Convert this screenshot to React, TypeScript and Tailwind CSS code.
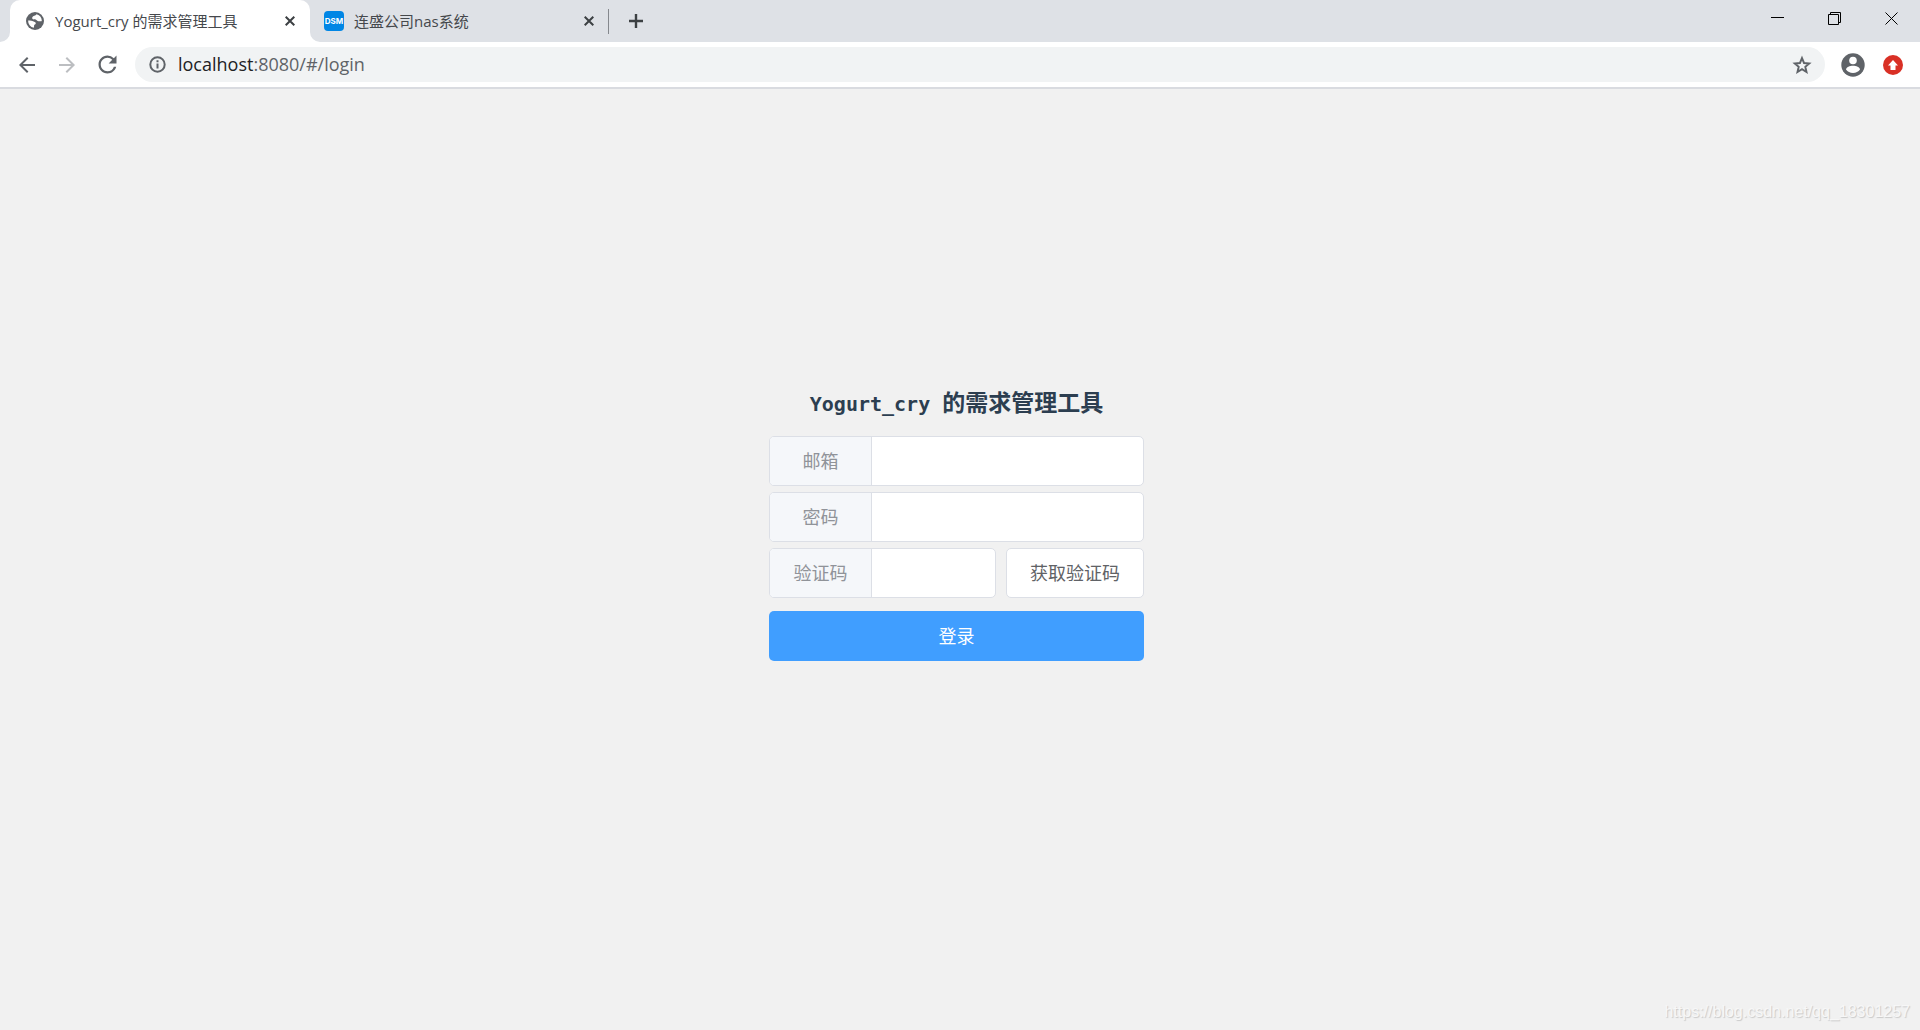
import { MdArrowBack, MdArrowForward, MdRefresh } from "react-icons/md";

function GlobeIcon() {
  return (
    <svg width="18" height="18" viewBox="0 0 18 18" className="shrink-0">
      <circle cx="9" cy="9" r="9" fill="#5f6368" />
      <path
        d="M10.500 2.200C9.800 3.600 8.500 3.400 7.200 4.200 5.900 5 5.800 6.600 7 7.200c1.200.5 2.600-.2 3.400.9.600.9 1.500 1.300 2.600 1.100 1-.2 1.700.5 2.800-.1A7 7 0 0 0 10.500 2.200z"
        fill="#fff"
      />
      <path
        d="M2.100 8.600c1.700-.2 3.700-.1 5 .6 1.200.6 2.700.8 2.700 2 0 1.300-1.500 1.100-1.700 2.200-.1.800.1 1.600-.3 2.400A7 7 0 0 1 2.100 8.600z"
        fill="#fff"
      />
    </svg>
  );
}

function InfoIcon() {
  return (
    <svg width="17" height="17" viewBox="0 0 17 17" className="shrink-0" fill="none" stroke="#5f6368" strokeWidth="2">
      <circle cx="8.500" cy="8.500" r="7.200" />
      <path d="M8.500 7.500v5M8.500 4.200v2" />
    </svg>
  );
}

function StarIcon() {
  return (
    <svg width="22" height="22" viewBox="0 0 24 24" fill="none" stroke="#5f6368" strokeWidth="2.100">
      <path d="M12 4.500l2.200 5.300 5.700.5-4.300 3.700 1.300 5.600-4.900-3-4.900 3 1.300-5.600-4.300-3.700 5.700-.5z" />
    </svg>
  );
}

function AvatarIcon() {
  return (
    <svg width="24" height="24" viewBox="0 0 24 24">
      <circle cx="12" cy="12" r="11.700" fill="#5f6368" />
      <circle cx="12" cy="7.500" r="3.800" fill="#fff" />
      <path d="M5 16.500c0-2.400 4-3.800 7-3.800s7 1.400 7 3.800c-1.500 2.200-4.100 3.500-7 3.500s-5.500-1.300-7-3.500z" fill="#fff" />
    </svg>
  );
}

function CloseIcon() {
  return (
    <svg width="10" height="10" viewBox="0 0 10 10" className="shrink-0">
      <path d="M.7.7l8.600 8.600M9.300.7L.7 9.300" stroke="#3c4043" strokeWidth="2" />
    </svg>
  );
}

function TabStrip() {
  return (
    <div className="flex h-[42px] items-stretch bg-[#dee1e6] pl-[10px] text-[15px] text-[#45484c]">
      <div className="relative flex w-[300px] items-center rounded-t-[10px] bg-white pr-[15px] pl-4">
        <GlobeIcon />
        <span className="ml-[11px] flex-1 truncate">Yogurt_cry 的需求管理工具</span>
        <button type="button" aria-label="关闭">
          <CloseIcon />
        </button>
        <svg width="10" height="10" viewBox="0 0 10 10" className="absolute bottom-0 -left-[10px]">
          <path d="M10 0v10H0A10 10 0 0 0 10 0z" fill="#fff" />
        </svg>
        <svg width="10" height="10" viewBox="0 0 10 10" className="absolute -right-[10px] bottom-0">
          <path d="M0 0v10h10A10 10 0 0 1 0 0z" fill="#fff" />
        </svg>
      </div>

      <div className="flex w-[298px] items-center pr-[14px] pl-[14px]">
        <span className="flex size-5 shrink-0 items-center justify-center rounded-sm bg-[#0086e5] font-['Inter'] text-[8px] font-bold text-white">
          DSM
        </span>
        <span className="ml-[10px] flex-1 truncate">连盛公司nas系统</span>
        <button type="button" aria-label="关闭">
          <CloseIcon />
        </button>
      </div>

      <span className="h-[25px] w-px self-center bg-[#85888d]" />

      <button type="button" aria-label="新标签页" className="ml-5">
        <svg width="14" height="14" viewBox="0 0 14 14">
          <path d="M7 0v14M0 7h14" stroke="#3c4043" strokeWidth="2.400" />
        </svg>
      </button>

      <div className="ml-auto flex h-9 items-center gap-[44px] pr-[22px]">
        <button type="button" aria-label="最小化">
          <svg width="13" height="13" viewBox="0 0 13 13">
            <path d="M0 5.500h13" stroke="#000" />
          </svg>
        </button>
        <button type="button" aria-label="还原">
          <svg width="13" height="13" viewBox="0 0 13 13" fill="none" stroke="#000">
            <path d="M.5 2.500h10v10H.5zM2.500 2.500v-2h10v10h-2" />
          </svg>
        </button>
        <button type="button" aria-label="关闭窗口">
          <svg width="13" height="13" viewBox="0 0 13 13">
            <path d="M.5.5l12 12M12.500.5l-12 12" stroke="#000" />
          </svg>
        </button>
      </div>
    </div>
  );
}

function Toolbar() {
  return (
    <div className="flex h-[47px] items-center border-b-2 border-[#d9dbe0] bg-white pr-[17px] pl-[15px] text-[#5f6368]">
      <button type="button" aria-label="后退">
        <MdArrowBack className="size-6" />
      </button>
      <button type="button" aria-label="前进" className="ml-4 text-[#bcbec1]">
        <MdArrowForward className="size-6" />
      </button>
      <button type="button" aria-label="重新加载" className="ml-[15px]">
        <MdRefresh className="size-[27px]" />
      </button>

      <div className="ml-[14px] flex h-[35px] flex-1 items-center rounded-full bg-[#f1f3f4] pr-3 pl-[14px]">
        <InfoIcon />
        <span className="ml-3 flex-1 text-[18px]">
          <span className="text-[#202124]">localhost</span>:8080/#/login
        </span>
        <button type="button" aria-label="收藏">
          <StarIcon />
        </button>
      </div>

      <button type="button" aria-label="用户" className="ml-4">
        <AvatarIcon />
      </button>
      <button type="button" aria-label="更新" className="ml-[18px]">
        <svg width="20" height="20" viewBox="0 0 20 20">
          <circle cx="10" cy="10" r="10" fill="#d93025" />
          <path d="M10 5l5 5.500h-2.500V15h-5v-4.500H5z" fill="#fff" />
        </svg>
      </button>
    </div>
  );
}

type FieldProps = {
  id: string;
  label: string;
  type?: string;
};

function Field({ id, label, type = "text" }: FieldProps) {
  return (
    <div className="flex h-[50px] min-w-0 flex-1 overflow-hidden rounded-[5px] border border-[#dcdfe6] bg-white">
      <label
        htmlFor={id}
        className="flex w-[102px] shrink-0 items-center justify-center border-r border-[#dcdfe6] bg-[#f5f7fa] text-[18px] text-[#909399]"
      >
        {label}
      </label>
      <input id={id} type={type} className="w-full min-w-0 px-4 text-[18px] text-[#606266] outline-none" />
    </div>
  );
}

function LoginForm() {
  return (
    <form className="w-full max-w-[375px]">
      <h1 className="mb-4 text-center text-[23px] leading-8 font-bold text-[#2c3e50]">
        <span className="font-['DejaVu_Sans_Mono'] text-[20px]">Yogurt_cry </span>
        的需求管理工具
      </h1>

      <div className="flex flex-col gap-[6px]">
        <div className="flex">
          <Field id="email" label="邮箱" />
        </div>
        <div className="flex">
          <Field id="password" label="密码" type="password" />
        </div>
        <div className="flex gap-[10px]">
          <Field id="code" label="验证码" />
          <button
            type="button"
            className="h-[50px] w-[138px] rounded-[5px] border border-[#dcdfe6] bg-white text-[18px] text-[#606266]"
          >
            获取验证码
          </button>
        </div>
      </div>

      <button type="button" className="mt-[13px] h-[50px] w-full rounded-[5px] bg-[#409eff] text-[18px] text-white">
        登录
      </button>
    </form>
  );
}

export default function App() {
  return (
    <div className="flex min-h-screen flex-col bg-[#f1f1f1] font-['Open_Sans','Noto_Sans_CJK_SC',sans-serif]">
      <header>
        <TabStrip />
        <Toolbar />
      </header>

      <main className="relative flex flex-1 items-center justify-center pr-[7px] pb-[72px]">
        <LoginForm />
        <span className="absolute right-[10px] bottom-[6px] font-['Liberation_Sans',sans-serif] text-[16px] text-[#f7f7f7] [text-shadow:1px_1px_1px_#c8c8c8]">
          https://blog.csdn.net/qq_18301257
        </span>
      </main>
    </div>
  );
}
